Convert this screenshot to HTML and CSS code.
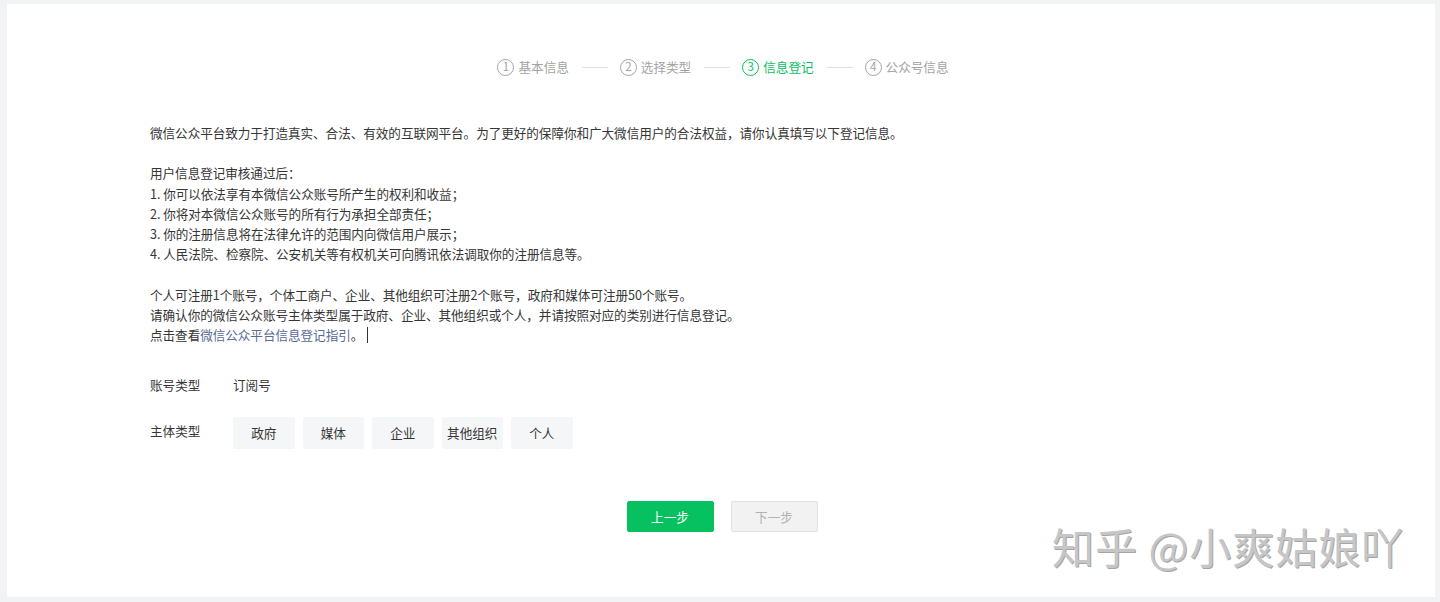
FILE: index.html
```html
<!DOCTYPE html>
<html lang="zh-CN">
<head>
<meta charset="utf-8">
<title>信息登记</title>
<link rel="stylesheet" href="styles.css">
</head>
<body>
<div class="page">
  <div class="card">
    <div class="steps">
      <div class="step"><span class="num">1</span><span class="label">基本信息</span></div>
      <span class="sep"></span>
      <div class="step"><span class="num">2</span><span class="label">选择类型</span></div>
      <span class="sep"></span>
      <div class="step active"><span class="num">3</span><span class="label">信息登记</span></div>
      <span class="sep"></span>
      <div class="step"><span class="num">4</span><span class="label">公众号信息</span></div>
    </div>

    <div class="intro">
      <p>微信公众平台致力于打造真实、合法、有效的互联网平台。为了更好的保障你和广大微信用户的合法权益，请你认真填写以下登记信息。</p>
      <p class="blank"></p>
      <p>用户信息登记审核通过后：</p>
      <p>1. 你可以依法享有本微信公众账号所产生的权利和收益；</p>
      <p>2. 你将对本微信公众账号的所有行为承担全部责任；</p>
      <p>3. 你的注册信息将在法律允许的范围内向微信用户展示；</p>
      <p>4. 人民法院、检察院、公安机关等有权机关可向腾讯依法调取你的注册信息等。</p>
      <p class="blank"></p>
      <p>个人可注册1个账号，个体工商户、企业、其他组织可注册2个账号，政府和媒体可注册50个账号。</p>
      <p>请确认你的微信公众账号主体类型属于政府、企业、其他组织或个人，并请按照对应的类别进行信息登记。</p>
      <p>点击查看<a class="link" href="#">微信公众平台信息登记指引</a>。<span class="caret"></span></p>
    </div>

    <div class="form">
      <div class="row">
        <div class="row-label">账号类型</div>
        <div class="row-value">订阅号</div>
      </div>
      <div class="row row-types">
        <div class="row-label">主体类型</div>
        <div class="types">
          <span class="type">政府</span>
          <span class="type">媒体</span>
          <span class="type">企业</span>
          <span class="type">其他组织</span>
          <span class="type">个人</span>
        </div>
      </div>
    </div>

    <div class="actions">
      <button class="btn btn-primary">上一步</button>
      <button class="btn btn-disabled">下一步</button>
    </div>

    <div class="watermark">知乎 @小爽姑娘吖</div>
  </div>
</div>
</body>
</html>
```

FILE: styles.css
```css
* { box-sizing: border-box; }
html, body { margin: 0; padding: 0; }
body {
  background: #f2f3f5;
  font-family: "Noto Sans CJK SC", "Noto Sans", "Liberation Sans", sans-serif;
  color: #353535;
  font-size: 12.6px;
}
.page {
  padding: 4px 5px 5px 7px;
}
.card {
  position: relative;
  background: #fff;
  height: 593px;
  padding: 53px 0 0 143px;
}

/* steps */
.steps {
  display: flex;
  align-items: center;
  justify-content: center;
  height: 20px;
  margin-left: -139px;
  color: #a3a3a3;
}
.step {
  display: flex;
  align-items: center;
  gap: 4px;
}
.num {
  width: 17px;
  height: 17px;
  border: 1px solid currentColor;
  border-radius: 50%;
  display: inline-flex;
  align-items: center;
  justify-content: center;
  font-size: 11.5px;
  line-height: 1;
}
.label { line-height: 20px; }
.step.active { color: #07c160; }
.sep {
  width: 26px;
  height: 1px;
  background: #dedede;
  margin: 0 12px 0 13px;
}

/* intro */
.intro {
  margin-top: 46px;
  line-height: 20.2px;
  letter-spacing: -0.05px;
}
.intro p { margin: 0; height: 20.2px; white-space: nowrap; }
.link { color: #576b95; text-decoration: none; }
.caret {
  display: inline-block;
  width: 1px;
  height: 16px;
  background: #333;
  vertical-align: -3px;
  margin-left: 4px;
}

/* form */
.form { margin-top: 30px; }
.row {
  display: flex;
  line-height: 20px;
}
.row-label { width: 83px; }
.row-types { margin-top: 22px; }
.row-types .row-label { padding-top: 4px; }
.types {
  display: flex;
  gap: 8px;
}
.type {
  width: 61.5px;
  height: 32px;
  background: #f5f6f7;
  border-radius: 2px;
  display: flex;
  align-items: center;
  justify-content: center;
  color: #353535;
}

/* actions */
.actions {
  display: flex;
  justify-content: center;
  gap: 17px;
  margin-top: 52px;
  margin-left: -143px;
  padding-left: 2px;
}
.btn {
  width: 87px;
  height: 31px;
  border-radius: 2px;
  font-family: inherit;
  font-size: 12.6px;
  padding: 0;
  cursor: pointer;
}
.btn-primary {
  background: #07c160;
  border: 1px solid #07c160;
  color: #fff;
}
.btn-disabled {
  background: #f2f2f2;
  border: 1px solid #e2e2e2;
  color: #b2b2b2;
}

/* watermark overlay */
.watermark {
  position: absolute;
  left: 1045px;
  top: 511px;
  font-size: 42px;
  color: #c6c6c6;
  text-shadow: 1px 1px 0 #a5a5a5;
  letter-spacing: 1px;
  white-space: nowrap;
}
```
